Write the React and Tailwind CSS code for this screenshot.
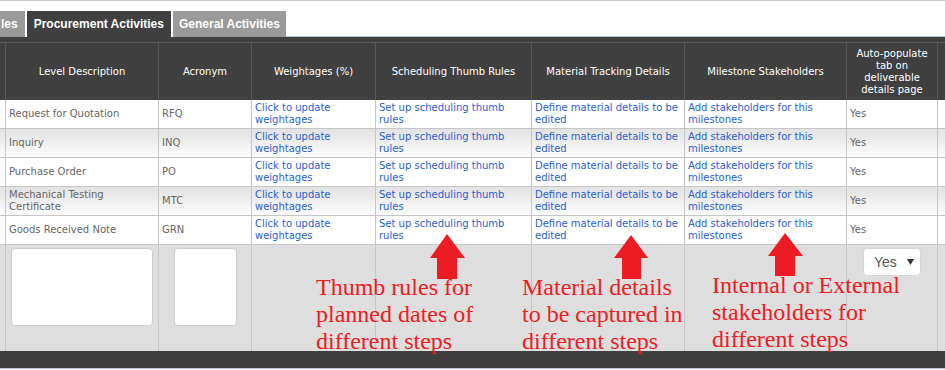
import React from 'react'

const rows = [
    { desc: 'Request for Quotation', acr: 'RFQ' },
    { desc: 'Inquiry', acr: 'INQ' },
    { desc: 'Purchase Order', acr: 'PO' },
    { desc: 'Mechanical Testing Certificate', acr: 'MTC' },
    { desc: 'Goods Received Note', acr: 'GRN' },
]

const colWidths = [6, 153, 93, 124, 156, 153, 162, 91, 20]

export default function App() {

    const thCss = "border-t border-r border-[#5a5a5a] px-[5px] h-[58px] align-middle text-center font-normal text-white"
    const tdCss = "border-b border-r border-[#c6c6c6] px-[3px] h-[29px] align-middle text-left"
    const linkCss = "text-[#2b5fce]"
    const footCss = "border-r border-[#c6c6c6] h-[106px] align-top text-center pt-[3px]"

    return (
        <div className="relative w-[945px] h-[370px] overflow-hidden bg-white border-t border-[#c8c8c8]">

            {/* TABS */}
            <div className="flex pt-[10px] font-['Liberation_Sans',sans-serif] text-[12px] font-bold text-white">
                <div className="h-[26px] flex items-center bg-[#9a9a9a] pl-[1px] pr-[7px]">les</div>
                <div className="w-[2px]"></div>
                <div className="h-[26px] flex items-center bg-[#404040] px-[7px]">Procurement Activities</div>
                <div className="w-[2px]"></div>
                <div className="h-[26px] flex items-center bg-[#9a9a9a] px-[6px]">General Activities</div>
                <div className="flex-1 h-[26px] border-b border-[#a9c6de]"></div>
            </div>

            {/* PANEL */}
            <div className="bg-[#404040] pt-[5px] pb-[17px] border-b border-[#a9c6de] overflow-hidden">
                <table className="table-fixed border-separate border-spacing-0 w-[958px] font-['DejaVu_Sans',sans-serif] text-[10px] leading-[12px]">
                    <colgroup>
                        {colWidths.map((w, i) => <col key={i} style={{ width: w }} />)}
                    </colgroup>
                    <thead>
                        <tr>
                            <th className={thCss}></th>
                            <th className={thCss}>Level Description</th>
                            <th className={thCss}>Acronym</th>
                            <th className={thCss}>Weightages (%)</th>
                            <th className={thCss}>Scheduling Thumb Rules</th>
                            <th className={thCss}>Material Tracking Details</th>
                            <th className={thCss}>Milestone Stakeholders</th>
                            <th className={thCss}>Auto-populate tab on deliverable details page</th>
                            <th className={thCss}></th>
                        </tr>
                    </thead>
                    <tbody>
                        {rows.map((row, i) => {
                            const bg = i % 2 === 1 ? "bg-linear-to-b from-[#e2e2e2] to-[#fcfcfc]" : "bg-white"
                            return (
                                <tr key={i}>
                                    <td className={`${tdCss} ${bg}`}></td>
                                    <td className={`${tdCss} ${bg} text-[#666]`}>{row.desc}</td>
                                    <td className={`${tdCss} ${bg} text-[#666]`}>{row.acr}</td>
                                    <td className={`${tdCss} ${bg} ${linkCss}`}>Click to update weightages</td>
                                    <td className={`${tdCss} ${bg} ${linkCss}`}>Set up scheduling thumb rules</td>
                                    <td className={`${tdCss} ${bg} ${linkCss}`}>Define material details to be edited</td>
                                    <td className={`${tdCss} ${bg} ${linkCss}`}>Add stakeholders for this milestones</td>
                                    <td className={`${tdCss} ${bg} text-[#666]`}>Yes</td>
                                    <td className={`${tdCss} ${bg}`}></td>
                                </tr>
                            )
                        })}
                        {/* NEW ROW */}
                        <tr className="bg-[#dedede]">
                            <td className={footCss}></td>
                            <td className={footCss}>
                                <div className="mx-auto w-[142px] h-[78px] bg-white border border-[#cccccc] rounded-[4px]"></div>
                            </td>
                            <td className={footCss}>
                                <div className="mx-auto w-[63px] h-[78px] bg-white border border-[#cccccc] rounded-[4px]"></div>
                            </td>
                            <td className={footCss}></td>
                            <td className={footCss}></td>
                            <td className={footCss}></td>
                            <td className={footCss}></td>
                            <td className={`${footCss} pt-[2px]`}>
                                <div className="mx-auto w-[58px] h-[28px] bg-white border border-[#d6d6d6] rounded-[4px] flex items-center pl-[10px] pr-[6px] font-['Liberation_Sans',sans-serif] text-[14px] text-[#555]">
                                    <span className="flex-1 text-left">Yes</span>
                                    <svg width="7" height="6" viewBox="0 0 7 6"><polygon points="0,0 7,0 3.5,6" fill="#333" /></svg>
                                </div>
                            </td>
                            <td className={footCss}></td>
                        </tr>
                    </tbody>
                </table>
            </div>

            {/* ANNOTATIONS */}
            <svg className="absolute left-0 top-0 pointer-events-none" width="945" height="370">
                <polygon points="447,233 465,257 457,257 457,278 437,278 437,257 430,257" fill="#ed1c24" />
                <polygon points="631,234 648,257 641,257 641,278 622,278 622,257 614,257" fill="#ed1c24" />
                <polygon points="785,232 803,255 795,255 795,275 775,275 775,255 768,255" fill="#ed1c24" />
            </svg>
            <div className="absolute left-[316px] top-[273px] whitespace-nowrap font-['Liberation_Serif',serif] text-[24px] leading-[27px] text-[#ed1c24]">
                Thumb rules for<br />planned dates of<br />different steps
            </div>
            <div className="absolute left-[522px] top-[273px] whitespace-nowrap font-['Liberation_Serif',serif] text-[24px] leading-[27px] text-[#ed1c24]">
                Material details<br />to be captured in<br />different steps
            </div>
            <div className="absolute left-[712px] top-[271px] whitespace-nowrap font-['Liberation_Serif',serif] text-[24px] leading-[27px] text-[#ed1c24]">
                Internal or External<br />stakeholders for<br />different steps
            </div>
        </div>
    )
}
